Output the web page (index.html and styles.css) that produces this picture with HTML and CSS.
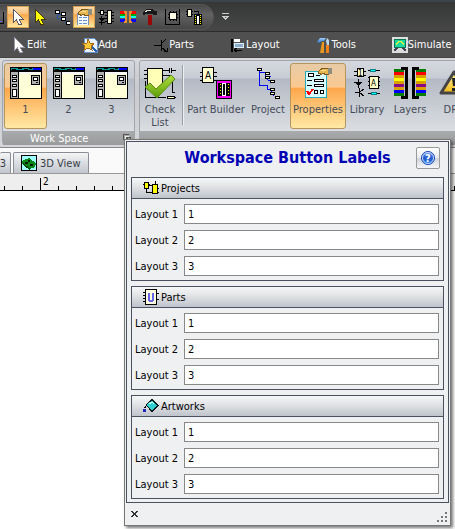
FILE: index.html
```html
<!DOCTYPE html>
<html lang="en">
<head>
<meta charset="utf-8">
<title>Workspace</title>
<link rel="stylesheet" href="styles.css">
</head>
<body>
<svg class="defs" aria-hidden="true">
  <defs>
    <linearGradient id="green" x2="0" y2="1"><stop stop-color="#b0e040"/><stop offset="1" stop-color="#5c9c08"/></linearGradient>
    <linearGradient id="blue" x2="0" y2="1"><stop stop-color="#78a8f0"/><stop offset=".5" stop-color="#2058c8"/><stop offset="1" stop-color="#3088e8"/></linearGradient>
    <linearGradient id="steel" x2="0" y2="1"><stop stop-color="#a0d0ff"/><stop offset="1" stop-color="#2870c0"/></linearGradient>
    <linearGradient id="warn" x2="0" y2="1"><stop stop-color="#fff4a0"/><stop offset="1" stop-color="#f0b818"/></linearGradient>
    <symbol id="arrow" viewBox="0 0 16 16"><path d="M3 0V14L6.500 11L9 16L11.500 15L9 10H13Z"/></symbol>
    <symbol id="layout" viewBox="0 0 32 32">
      <path fill="#000" d="M0 0H32V32H0Z"/>
      <path fill="#009898" d="M1 1H23V3H1Z"/><path fill="#000" d="M2 2h4v1H2zM8 1h4v1H8zM14 2h4v1h-4zM19 1h3v1h-3z"/>
      <path fill="#00f" d="M23 1H31V3H23Z"/>
      <path fill="#b0b0b0" d="M1 5H8V31H1Z"/><path fill="#ffffd8" d="M9 7H31V31H9Z"/><path fill="#f8f8f8" d="M9 5H31V7H9Z"/>
      <path fill="#fff" stroke="#000" d="M2.500 8.500H6.500V10.500H2.500ZM2.500 12.500H6.500V14.500H2.500ZM2.500 17.500H6.500V19.500H2.500ZM2.500 22.500H6.500V29.500H2.500Z"/>
      <path fill="#b0b0b0" stroke="#000" d="M21.500 8.500H29.500V17.500H21.500Z"/><path fill="#fff" stroke="#000" d="M23.500 10.500H27.500V13.500H23.500Z"/><path stroke="#000" d="M26 15.500h2"/>
    </symbol>
    <symbol id="hand" viewBox="0 0 14 8"><path fill="#e8b850" stroke="#80581c" d="M.5 3.500L4 .5H10V6.500H7L6 5L3 6.500L2 5L.5 5Z"/><path fill="#909080" d="M10 0h4v6h-4z"/><path fill="#ffe090" d="M3 2h5v1H3z"/></symbol>
  </defs>
</svg>

<main class="app">
  <header class="quickbar">
    <div class="pill">
      <svg class="cut" viewBox="0 0 7 22"><path d="M0 17.500H3.500V6" fill="none" stroke="#000"/><path d="M0 15h2" stroke="#66f"/></svg>
      <button class="tool on" aria-label="Select"><svg viewBox="0 0 16 16"><use href="#arrow" fill="#fff" stroke="#556"/></svg></button>
      <button class="tool" aria-label="Block select"><svg viewBox="0 0 16 16"><use href="#arrow" fill="#ff0" stroke="#443c00"/></svg></button>
      <button class="tool" aria-label="Tree"><svg viewBox="0 0 16 16"><path d="M3 3V9H13M3 5H9M11 9V13H14" fill="none" stroke="#2458a8"/><path d="M1 1h4v3H1zM7 3h4v3H7zM7 8h4v3H7zM12 12h4v3h-4z" fill="#fff" stroke="#000"/></svg></button>
      <button class="tool on" aria-label="Properties"><svg viewBox="0 0 16 16"><path d="M1 4H12V16H1Z" fill="#f4f8ff" stroke="#7890b8"/><path d="M3 8h3M7 8h4M3 11h3M7 11h4M3 14h3M7 14h4" stroke="#6890c8"/><use href="#hand" x="2" y="0" width="14" height="8"/></svg></button>
      <button class="tool" aria-label="Components"><svg viewBox="0 0 16 16"><path d="M0 3.500h7M7 3.500h9M7 6.500h9M7 9.500h9M7 12.500h9M3.500 7v9M1 13.500h6" stroke="#000"/><path d="M1 9H7L4 13Z" fill="#000"/><path d="M2.500 1.500h3v4h-3zM9.500 1.500h4v13h-4z" fill="#ffffe0" stroke="#000"/></svg></button>
      <button class="tool" aria-label="Layers"><svg viewBox="0 0 16 16"><path d="M0 2h5v3H0zM11 2h5v3h-5z" fill="#f00"/><path d="M0 5h5v2H0zM11 5h5v2h-5z" fill="#0a0"/><path d="M0 7h5v2H0zM11 7h5v2h-5z" fill="#0ff"/><path d="M0 10h5v3H0zM11 10h5v3h-5z" fill="#00f"/><path d="M4 2h3v12H4V12h1V4H4zM9 2h3v2h-1v8h1v2H9z" fill="#e89030"/></svg></button>
      <button class="tool" aria-label="Build"><svg viewBox="0 0 16 16"><path d="M1 3L5 0H10L12 2H15V6H12L10 5H5L1 6Z" fill="#181818"/><path d="M3 3L6 1H9" stroke="#ddd" fill="none"/><path d="M6 6h4v10H6z" fill="#980808"/></svg></button>
      <button class="tool" aria-label="Package"><svg viewBox="0 0 16 16"><path d="M1.500 0V15.500H15.500V0M4 5h10M4 8h10M6 2v10M9 2v10M12 2v10" fill="none" stroke="#000"/><path d="M5.500 3.500h7v7h-7z" fill="#ffffe8" stroke="#000"/></svg></button>
      <button class="tool" aria-label="Convert"><svg viewBox="0 0 16 16"><path d="M0 2.500h7M0 5.500h7M8 2.500h4.500v3" stroke="#000" fill="none"/><path d="M1.500.5h4v7h-4z" fill="#ffffd8" stroke="#000"/><path d="M8 5h8v11H8z" fill="#000"/><path d="M9.500 6v10M14.500 6v10" stroke="#ff0" stroke-dasharray="1 1"/><path d="M11 7h2v8h-2z" fill="#fff"/></svg></button>
    </div>
    <button class="more" aria-label="Customize"><svg viewBox="0 0 7 7"><path d="M0 .5H7" stroke="#ccc"/><path d="M.5 3H6.500L3.500 6Z" fill="#555" stroke="#ccc"/></svg></button>
  </header>

  <nav class="menubar">
    <button><svg viewBox="0 0 16 16"><use href="#arrow" fill="#fff" stroke="#99a"/></svg>Edit</button>
    <button><svg viewBox="0 0 16 16"><path d="M2 1H12L15 4V15H2Z" fill="#e8f2ff" stroke="#6890c8"/><path d="M8 8L15 15" stroke="#2860b0" stroke-width="2"/><path d="M6 2L8 6L12 7L9 9L10 13L6 11L2 13L3 9L0 6L5 6Z" fill="#ffc838" stroke="#a86810"/></svg>Add</button>
    <button><svg viewBox="0 0 16 16"><path d="M1 8.500H8M8.500 3V14M8 7L13 2M8 10L14 15M11 14H14V11" stroke="#000" fill="none"/></svg>Parts</button>
    <button><svg viewBox="0 0 16 16"><path d="M1 2h2v13H1z" fill="#000"/><path d="M4 2h6v3H4z" fill="#fff"/><path d="M4 6h9v4H4z" fill="#8cacc8" stroke="#def"/><path d="M4 13h8M7 11L4 13L7 15" stroke="#000" fill="none"/></svg>Layout</button>
    <button><svg class="smooth" viewBox="0 0 16 16"><path d="M1 5L4 1H10L8 4H6L3 6Z" fill="url(#steel)"/><path d="M6 5H8V16H4Z" fill="#e89820"/><path d="M11 1L13 3V8H11L10 4Z" fill="#b8d8f4"/><path d="M10 8h3v8h-3z" fill="#f08018"/></svg>Tools</button>
    <button><svg viewBox="0 0 16 16"><path d="M0 0H16V16H0Z" fill="#ddd"/><path d="M2.500 2.500H13.500V10.500H2.500Z" fill="#18d8a0" stroke="#087858"/><path d="M4 8Q8 1 12 8" fill="none" stroke="#d8f040"/><path d="M5 11L2 14M11 11L14 14" stroke="#445" stroke-width="2"/></svg>Simulate</button>
  </nav>

  <div class="ribbon">
    <section class="group workspace">
      <div class="items">
        <button class="big on"><svg viewBox="0 0 32 32"><use href="#layout"/></svg>1</button>
        <button class="big"><svg viewBox="0 0 32 32"><use href="#layout"/></svg>2</button>
        <button class="big"><svg viewBox="0 0 32 32"><use href="#layout"/></svg>3</button>
      </div>
      <footer>Work Space<svg viewBox="0 0 8 8"><path d="M.5 6V.5H6M3 3H7V7H3ZM3 3L7 7" fill="none" stroke="#555"/><path d="M2 6V2H6" fill="none" stroke="#eee"/></svg></footer>
    </section>
    <section class="group tools">
      <div class="items">
        <button class="big narrow"><svg viewBox="0 0 32 32"><path d="M0 3.500h4M0 7.500h4M0 11.500h4M18 3.500h7M28 3.500h4M25.500 1v5M27.500 1v5M18 8.500h8V14M28 13v12h3M1.500 14v16.500H22M27 30.500h5" fill="none" stroke="#000"/><path d="M3.500 1.500h15v21h-15z" fill="#ffffb8" stroke="#000"/><path d="M23.500 29.500h7v2h-7z" fill="#ffffb8" stroke="#000"/><path class="smooth" d="M1 20L6 16L12 22L27 8L31 12L13 31Z" fill="url(#green)" stroke="#588c10"/></svg>Check<br>List</button>
        <span class="rule"></span>
        <button class="big wide"><svg viewBox="0 0 32 32"><path d="M0 5.500h17M0 9.500h17M0 13.500h17" stroke="#000"/><path d="M2.500.5h11v15h-11z" fill="#ffffd0" stroke="#000"/><text x="5" y="12" font-size="10">A</text><path d="M16 13.500h15.500v18H16z" fill="#f0f" stroke="#000"/><path d="M18 16h12v13H18z" fill="#000"/><path d="M20 17v12M28 17v12" stroke="#ff0" stroke-dasharray="1 2"/><path d="M22.500 16.500h3v12h-3z" stroke="#fff"/></svg>Part Builder</button>
        <button class="big mid"><svg viewBox="0 0 32 32"><path d="M7.500 3V18.500H15M7 5.500H13M13.500 6V9M14 9.500h5M15.500 9v4M16 13.500h3M15.500 18v4.500h3M19.500 23v4h2M19 26.500h4M21.500 26v3" fill="none" stroke="#00f"/><path d="M5.500 1.500h4v2h-4zM13.500 5.500h4v2h-4zM13.500 9.500h4v2h-4zM18.500 13.500h4v2h-4zM18.500 21.500h4v2h-4zM18.500 25.500h4v2h-4zM23.500 29.500h4v2h-4z" fill="#ffffc8" stroke="#000"/></svg>Project</button>
        <button class="big prop on"><svg viewBox="0 0 32 32"><path d="M3 4H24V30H3Z" fill="#d8ffff" stroke="#28a8b8"/><path d="M6.500 6.500h5v3h-5z" fill="#fff" stroke="#000"/><path d="M14 8.500h4M5 13.500h5M5 18.500h5" stroke="#000"/><path d="M12.500 12.500h9v2h-9zM12.500 17.500h9v2h-9zM12.500 23.500h3v3h-3zM18.500 23.500h3v3h-3z" fill="#fff" stroke="#000"/><path d="M5 24L7 27L11 22" fill="none" stroke="#f00" stroke-width="2"/><use href="#hand" x="16" y="1" width="14" height="8"/></svg>Properties</button>
        <button class="big lib"><svg viewBox="0 0 32 32"><path d="M3 4.500h12M3 8.500h12M17 3.500h12M17 10.500h12M17 14.500h12M17 18.500h12M3 15.500h8M7.500 12v9M4 25.500h4M8.500 21v9M9 25L13 22M9 26L13 29M17 26.500h12" stroke="#000"/><path d="M4 15H11L7.500 19Z" fill="#000"/><path d="M6.500 1.500h6v8h-6zM18.500 9.500h9v12h-9z" fill="#ffffc8" stroke="#000"/><path d="M19.500 2.500h5v2h-5zM20.500 25.500h5v2h-5z" fill="#0ff" stroke="#008080"/><text x="7" y="9" font-size="8">1</text><text x="20" y="19" font-size="8">A</text></svg>Library</button>
        <button class="big mid"><svg viewBox="0 0 32 32"><path fill="#088008" d="M0 2h10v3H0zM22 2h10v3H22zM0 26h10v3H0zM22 26h10v3H22z"/><path fill="#f00" d="M0 5h10v3H0zM22 5h10v3H22z"/><path fill="#d8a000" d="M0 8h10v3H0zM22 8h10v3H22zM0 14h10v3H0zM22 14h10v3H22zM0 20h10v3H0zM22 20h10v3H22z"/><path fill="#ff0" d="M0 11h10v3H0zM22 11h10v3H22z"/><path fill="#880888" d="M0 17h10v3H0zM22 17h10v3H22z"/><path fill="#00f" d="M0 23h10v3H0zM22 23h10v3H22z"/><path d="M7 1.500H12.500V30.500H7M25 1.500H19.500V30.500H25" fill="none" stroke="#000" stroke-width="3"/></svg>Layers</button>
        <button class="big mid"><svg class="smooth" viewBox="0 0 32 32"><path d="M16 5L29 26H3Z" fill="url(#warn)" stroke="#444" stroke-width="3" stroke-linejoin="round"/><path d="M14 11h4l-1 8h-2zM14 21h4v3h-4z" fill="#222"/></svg>DRC</button>
      </div>
      <footer></footer>
    </section>
  </div>

  <div class="tabs">
    <button class="tab first">3</button>
    <button class="tab"><svg viewBox="0 0 16 16"><path d="M0 0H16V16H0Z" fill="#a0ffff" stroke="#000" stroke-width="2"/><path d="M1 6L8 3L15 8L14 12L9 14L1 9Z" fill="#088818"/><path d="M2 10L9 15L9 13L2 8Z" fill="#034a08"/><path d="M7 5h2v2H7zM4 7h3v2H4zM9 9h3v2H9z" fill="#001c00"/></svg>3D View</button>
  </div>
  <div class="ruler"><svg width="100%" height="16">
    <defs><pattern id="ticks" width="18" height="16" patternUnits="userSpaceOnUse" x="4"><path d="M.5 12V16" stroke="#000"/></pattern></defs>
    <rect width="100%" height="16" fill="url(#ticks)"/><path d="M40.500 4V16" stroke="#000"/><text x="43" y="11" font-size="10">2</text></svg></div>
  <div class="canvas"></div>

  <form class="popup" aria-labelledby="title">
    <div class="body">
      <div class="head">
        <h1 id="title">Workspace Button Labels</h1>
        <button type="button" class="help" aria-label="Help"><svg class="smooth" viewBox="0 0 14 14"><circle cx="7" cy="7" r="6.500" fill="url(#blue)" stroke="#1848b0"/><circle cx="7" cy="7" r="5.500" fill="none" stroke="#c8dcff"/><text x="4" y="11" font-size="11" font-weight="bold" fill="#fff">?</text></svg></button>
      </div>
      <fieldset>
        <legend><svg viewBox="0 0 16 16"><path d="M0 4.500h7M3.500 8v4.500h7M5 5.500h5M12.500 1v3M14 12.500h2M14 8.500h2" fill="none" stroke="#000"/><path d="M1.500 2.500h4v6h-4zM9.500 4.500h5v9h-5z" fill="#ff0" stroke="#000"/></svg>Projects</legend>
        <label>Layout 1<input type="text" value="1"></label>
        <label>Layout 2<input type="text" value="2"></label>
        <label>Layout 3<input type="text" value="3"></label>
      </fieldset>
      <fieldset>
        <legend><svg viewBox="0 0 16 16"><path d="M0 3.500h3M0 6.500h3M0 9.500h3M0 12.500h3M13 4.500h3M13 10.500h3" stroke="#000"/><path d="M2.500.5h11v15h-11z" fill="#ffffe0" stroke="#000"/><path d="M6 4V10Q6 12 8 12T10 10V4" fill="none" stroke="#66e" stroke-width="2"/></svg>Parts</legend>
        <label>Layout 1<input type="text" value="1"></label>
        <label>Layout 2<input type="text" value="2"></label>
        <label>Layout 3<input type="text" value="3"></label>
      </fieldset>
      <fieldset>
        <legend><svg viewBox="0 0 16 16"><path d="M3 7L9 1.500L15 7.500L9 13.500Z" fill="#30d0d0" stroke="#001818"/><path d="M6 6L9 4L11 6" stroke="#c8ffff" fill="none"/><path d="M4 7L1.500 10" stroke="#000"/><path d="M0 11h3v3H0z" fill="#2028b8"/></svg>Artworks</legend>
        <label>Layout 1<input type="text" value="1"></label>
        <label>Layout 2<input type="text" value="2"></label>
        <label>Layout 3<input type="text" value="3"></label>
      </fieldset>
    </div>
    <div class="foot">
      <button type="button" aria-label="Close"><svg viewBox="0 0 7 6"><path d="M0 0h2l1.500 2L5 0h2L4.500 3L7 6H5L3.500 4L2 6H0L2.500 3Z" fill="#333"/></svg></button>
      <svg class="grip" viewBox="0 0 10 10"><path d="M8 0h2v2H8zM4 4h2v2H4zM8 4h2v2H8zM0 8h2v2H0zM4 8h2v2H4zM8 8h2v2H8z" fill="#777"/></svg>
    </div>
  </form>
</main>
</body>
</html>
```

FILE: styles.css
```css
* { box-sizing: border-box; }
body {
  margin: 0;
  overflow: hidden;
  background: #fff;
  color: #000;
  font: 11px/13px "DejaVu Sans Condensed", "DejaVu Sans", sans-serif;
}
button { margin: 0; padding: 0; border: 0; background: none; font: inherit; color: inherit; }
svg { display: block; flex: none; shape-rendering: crispEdges; }
.smooth { shape-rendering: auto; }
.defs { position: absolute; width: 0; height: 0; }
.app { position: relative; display: flex; flex-direction: column; min-height: 100vh; }

.quickbar {
  display: flex;
  align-items: center;
  height: 32px;
  border-top: 2px solid #3c444b;
  border-bottom: 1px solid #2c2c2c;
  background: linear-gradient(#363838, #474747);
}
.pill {
  display: flex;
  align-items: center;
  height: 26px;
  padding-right: 8px;
  border: 1px solid #555;
  border-left: 0;
  border-radius: 0 13px 13px 0;
  background: linear-gradient(#494949, #636363 40%, #464646);
}
.cut { width: 7px; height: 22px; }
.tool { display: grid; place-items: center; width: 22px; height: 22px; }
.tool svg, .menubar svg { width: 16px; height: 16px; }
.on { background: linear-gradient(#fbdcae, #fbc07a 36%, #fda648 38%, #ffe8a0); }
.tool.on { border: 1px solid #d9a050; }
.more { margin-left: 8px; }
.more svg { width: 7px; height: 7px; }

.menubar {
  display: flex;
  gap: 36px;
  height: 26px;
  padding-left: 11px;
  border-bottom: 1px solid #444;
  background: #505050;
  color: #fff;
}
.menubar button { display: flex; align-items: center; white-space: nowrap; }

.ribbon {
  display: flex;
  gap: 4px;
  height: 90px;
  padding: 2px 0 2px 2px;
  overflow: hidden;
  border-bottom: 1px solid #888;
  background: linear-gradient(#d6d8dc, #c9cbd0 30%, #d4d6d9);
}
.group {
  flex: none;
  border: 1px solid #a2a5aa;
  border-radius: 3px;
  background: linear-gradient(#d5d8de, #c8ccd4 20%, #b4bac5 22%, #dee1e4 90%);
}
.items { display: flex; height: 70px; padding: 2px 1px; }
.big {
  display: flex;
  flex-direction: column;
  align-items: center;
  width: 43px;
  height: 66px;
  padding-top: 3px;
  border: 1px solid transparent;
  border-radius: 3px;
  color: #454c58;
  white-space: nowrap;
}
.big svg { width: 32px; height: 32px; margin-bottom: 4px; }
.big.on { border-color: #b8955c; background: linear-gradient(#e8cba6, #fbc990 36%, #fda64c 38%, #ffe9a4); }
.narrow { width: 38px; }
.wide { width: 60px; }
.mid { width: 44px; }
.prop { width: 56px; }
.lib { width: 42px; }
.rule { width: 2px; height: 60px; margin: 2px 2px 0 3px; border-left: 1px solid #9a9ea6; background: #eceef0; }
.group footer {
  display: flex;
  align-items: center;
  justify-content: center;
  height: 14px;
  background: linear-gradient(#a8aaac, #999b9d);
  color: #fff;
}
.group footer svg { width: 8px; height: 8px; }
.workspace footer { padding-left: 27px; justify-content: space-between; padding-right: 3px; }

.tabs { display: flex; gap: 2px; height: 26px; padding-top: 4px; background: #fafafa; border-bottom: 1px solid #999; }
.tab {
  display: flex;
  align-items: center;
  gap: 3px;
  padding: 0 7px;
  border: 1px solid #8a8d94;
  border-bottom: 0;
  border-radius: 2px 2px 0 0;
  background: linear-gradient(#f4f5f6, #dcdfe3 45%, #c2c6cd);
  color: #383c44;
}
.tab svg { width: 16px; height: 16px; }
.first { width: 11px; padding: 0 4px 0 0; border-left: 0; justify-content: flex-end; }
.ruler { height: 17px; border-bottom: 1px solid #000; background: #eee; }
.canvas { flex: 1; background: #fff; }

.popup {
  position: absolute;
  top: 139px;
  left: 124px;
  right: 4px;
  border: 1px solid #777;
  background: #eff0f2;
  box-shadow: 2px 2px 3px #0008;
}
.body { margin: 1px 1px 0; padding: 5px 4px 3px; border: 1px solid #4c5160; }
.head { display: flex; align-items: center; height: 22px; margin-bottom: 8px; padding: 0 4px 0 28px; }
h1 { flex: 1; margin: 0; font: bold 16px/20px "DejaVu Sans Condensed", sans-serif; text-align: center; color: #0000b4; white-space: nowrap; }
.help { display: grid; place-items: center; width: 24px; height: 22px; border: 1px solid #999; border-radius: 2px; background: linear-gradient(#fff, #e8eaec 48%, #cfd4da 52%, #f4f6f8); }
.help svg { width: 14px; height: 14px; }
fieldset { display: flex; flex-direction: column; gap: 6px; min-width: 0; margin: 0 0 5px; padding: 0 4px 4px 3px; border: 1px solid #4c5160; }
fieldset:last-child { margin-bottom: 0; }
legend {
  float: left;
  display: flex;
  align-items: center;
  gap: 2px;
  height: 21px;
  margin: 0 -4px -1px -3px;
  padding: 0 11px;
  border-bottom: 1px solid #4c5160;
  background: linear-gradient(#f6f7f8, #e0e2e5 45%, #bfc3cb);
}
legend svg { width: 16px; height: 16px; }
label { display: flex; align-items: center; justify-content: space-between; height: 20px; }
input { flex: none; width: calc(100% - 49px); height: 20px; padding: 0 3px; border: 1px solid #888; border-radius: 0; background: #fff; font: inherit; }
.foot { display: flex; justify-content: space-between; align-items: center; height: 22px; padding: 0 3px 0 6px; }
.foot svg { width: 7px; height: 6px; }
.foot .grip { width: 10px; height: 10px; align-self: flex-end; margin-bottom: 3px; }
```
